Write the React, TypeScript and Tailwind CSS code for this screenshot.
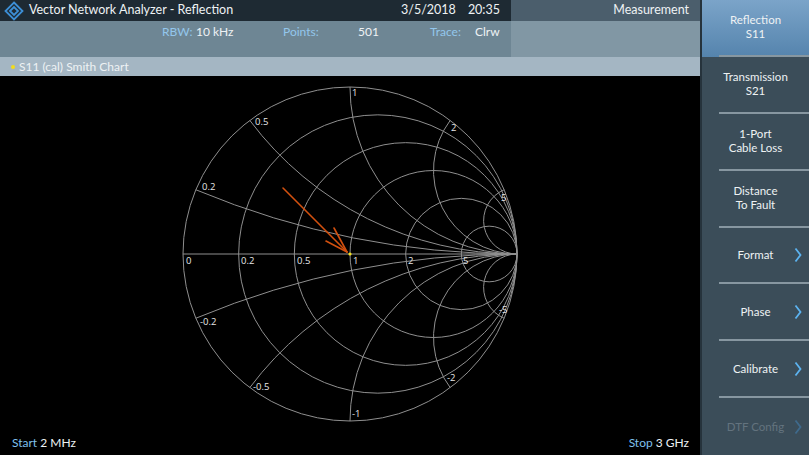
import React from 'react';

const CX = 350;
const CY = 178;
const R = 167;
const GRID = '#8f8f8f';

const resistances = [0.2, 0.5, 1, 2, 5];
const reactances = [0.2, 0.5, 1, 2, 5];

function reactancePath(x: number, sign: 1 | -1) {
  const d = x * x + 1;
  const px = CX + (R * (x * x - 1)) / d;
  const py = CY - (sign * R * 2 * x) / d;
  const rad = R / x;
  return `M ${CX + R} ${CY} A ${rad} ${rad} 0 0 ${sign > 0 ? 1 : 0} ${px} ${py}`;
}

const labels: Array<[string, number, number]> = [
  ['0', 186, 185],
  ['0.2', 241, 185],
  ['0.5', 297, 185],
  ['1', 353, 185],
  ['2', 408, 185],
  ['5', 463, 185],
  ['1', 352, 17],
  ['0.5', 255, 46],
  ['0.2', 202, 111],
  ['2', 451, 52],
  ['5', 501, 122],
  ['-1', 352, 338],
  ['-0.5', 253, 311],
  ['-0.2', 200, 246],
  ['-2', 447, 302],
  ['-5', 499, 234],
];

function SmithChart() {
  return (
    <svg width={700} height={356} viewBox="0 0 700 356" className="block">
      <g fill="none" stroke={GRID} strokeWidth={1}>
        <circle cx={CX} cy={CY} r={R} />
        {resistances.map((r) => (
          <circle key={r} cx={CX + (R * r) / (1 + r)} cy={CY} r={R / (1 + r)} />
        ))}
        {reactances.map((x) => (
          <React.Fragment key={x}>
            <path d={reactancePath(x, 1)} />
            <path d={reactancePath(x, -1)} />
          </React.Fragment>
        ))}
        <line x1={CX - R} y1={CY} x2={CX + R} y2={CY} />
      </g>
      <g fill="#e6e6e6" fontSize={9.5} fontFamily="'Open Sans', sans-serif">
        {labels.map(([t, x, y], i) => (
          <text key={i} x={x} y={y} dominantBaseline="middle">
            {t}
          </text>
        ))}
      </g>
      <g stroke="#d2500f" strokeWidth={1.6} fill="none" strokeLinecap="round">
        <line x1={283} y1={112} x2={347} y2={176} />
        <line x1={334} y1={152} x2={347} y2={176} />
        <line x1={326} y1={165} x2={347} y2={176} />
      </g>
      <circle cx={350} cy={178} r={1.6} fill="#f5e11a" />
    </svg>
  );
}

function Logo() {
  return (
    <svg width={20} height={20} viewBox="0 0 20 20">
      <g fill="none" stroke="#3d8fd6" strokeWidth={1.8}>
        <path d="M10 1.5 L18.5 10 L10 18.5 L1.5 10 Z" />
        <path d="M6 10 L10 6 L14 10 L10 14 Z" />
      </g>
    </svg>
  );
}

const buttons = [
  { lines: ['Reflection', 'S11'], active: true },
  { lines: ['Transmission', 'S21'] },
  { lines: ['1-Port', 'Cable Loss'] },
  { lines: ['Distance', 'To Fault'] },
  { lines: ['Format'], chevron: true },
  { lines: ['Phase'], chevron: true },
  { lines: ['Calibrate'], chevron: true },
  { lines: ['DTF Config'], chevron: true, disabled: true },
];

function Chevron({ dim }: { dim?: boolean }) {
  return (
    <svg width={8} height={16} viewBox="0 0 8 16" className="absolute right-[7px]">
      <path d="M1.5 1.5 L6.5 8 L1.5 14.5" fill="none" stroke={dim ? '#3f6a8c' : '#5cb3f0'} strokeWidth={1.8} />
    </svg>
  );
}

export default function App() {
  return (
    <div
      className="flex h-[455px] w-[809px] overflow-hidden bg-black text-[#eef2f4]"
      style={{ fontFamily: "Lato, 'Open Sans', sans-serif" }}
    >
      <div className="flex w-[700px] flex-col">
        <div className="flex h-[21px]">
          <div className="flex w-[511px] items-center bg-[#1e2a33] pl-[4px] text-[12.5px]">
            <Logo />
            <span className="ml-[5px]">Vector Network Analyzer - Reflection</span>
            <span className="ml-auto">3/5/2018</span>
            <span className="ml-[12px] mr-[11px]">20:35</span>
          </div>
          <div className="flex flex-1 items-center justify-end bg-[#4b5e6c] pr-[11px] text-[12.5px]">
            Measurement
          </div>
        </div>
        <div className="flex h-[36px]">
          <div className="w-[511px] bg-[#6e8694] text-[12px]">
            <div className="flex h-[21px] items-center">
              <span className="ml-[162px] w-[34px] text-[#93c6ec]">RBW:</span>
              <span className="w-[87px]">10 kHz</span>
              <span className="w-[75px] text-[#93c6ec]">Points:</span>
              <span className="w-[72px]">501</span>
              <span className="w-[45px] text-[#93c6ec]">Trace:</span>
              <span>Clrw</span>
            </div>
          </div>
          <div className="flex-1 bg-[#8197a4]" />
        </div>
        <div className="flex h-[19px] items-center bg-[#a4b6c3] pl-[11px] text-[12px]">
          <span className="mr-[4px] h-[4px] w-[4px] rounded-full bg-[#f3dc1c]" />
          S11 (cal) Smith Chart
        </div>
        <div className="flex flex-1 flex-col bg-black">
          <SmithChart />
          <div className="flex flex-1 items-center justify-between px-[12px] pb-[2px] text-[12px]">
            <span>
              <span className="text-[#7fc0ee]">Start</span> 2 MHz
            </span>
            <span className="mr-[-1px]">
              <span className="text-[#7fc0ee]">Stop</span> 3 GHz
            </span>
          </div>
        </div>
      </div>
      <div className="flex w-[109px] flex-col border-l-2 border-[#26333c] bg-[#3b4d59]">
        {buttons.map((b, i) => (
          <div
            key={i}
            className={
              b.active
                ? 'flex h-[57px] flex-col bg-gradient-to-b from-[#7ba4c9] to-[#5584ad]'
                : 'flex h-[57px] flex-col'
            }
          >
            <div
              className={
                b.disabled
                  ? 'relative flex flex-1 flex-col items-center justify-center text-[11.5px] leading-[14px] text-[#63737e]'
                  : 'relative flex flex-1 flex-col items-center justify-center text-[11.5px] leading-[14px] text-[#eef2f4]'
              }
            >
              {b.lines.map((l) => (
                <span key={l}>{l}</span>
              ))}
              {b.chevron && <Chevron dim={b.disabled} />}
            </div>
            {i < buttons.length - 1 && <div className="ml-[17px] h-[2px] bg-[#8797a1]" />}
          </div>
        ))}
      </div>
    </div>
  );
}
